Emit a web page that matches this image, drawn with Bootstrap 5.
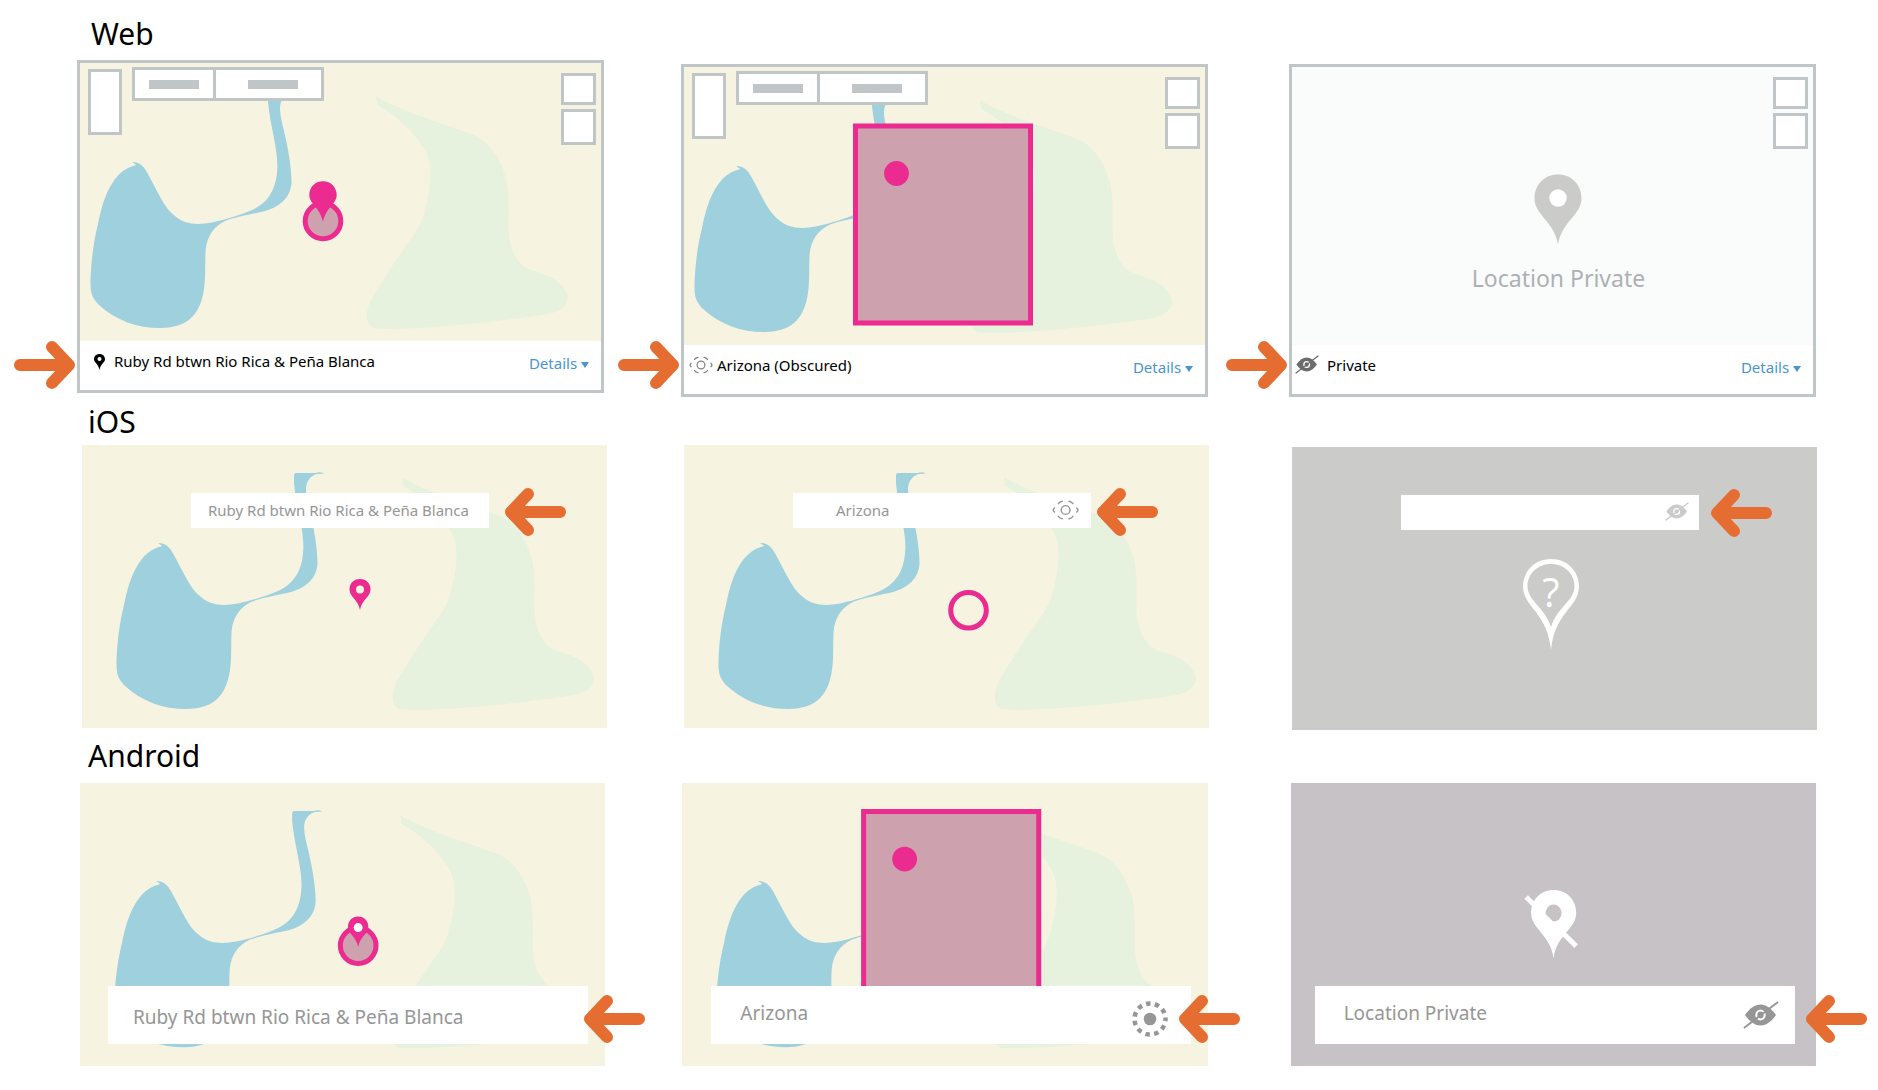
<!DOCTYPE html>
<html lang="en">
<head>
<meta charset="utf-8">
<meta name="viewport" content="width=device-width, initial-scale=1">
<title>Location privacy by platform</title>
<link href="https://cdn.jsdelivr.net/npm/bootstrap@5.3.0/dist/css/bootstrap.min.css" rel="stylesheet">
<script src="https://cdn.jsdelivr.net/npm/bootstrap@5.3.0/dist/js/bootstrap.bundle.min.js"></script>
<style>
  :root { --line: #c0c5c8; --sand: #f6f3e0; --pink: #eb2b90; --orange: #e66d31; }
  body { font-family: "Noto Sans", sans-serif; color: #000; background: #fff; font-size: 15px; line-height: 20px; }
  h2 { font-size: 30px; font-weight: 400; line-height: 40px; margin: 0; padding: 0 88px; }
  .h-web { padding-top: 14px; padding-bottom: 6px; padding-left: 91px; }
  .h-ios { padding-top: 5px; padding-bottom: 3px; }
  .h-droid { padding-top: 6px; padding-bottom: 7px; }

  .panels { display: flex; align-items: flex-start; }
  .panels > * { flex: 1 1 0; min-width: 0; position: relative; }
  .panels > :nth-child(2) { margin-left: 77px; }
  .panels > :nth-child(3) { margin-left: 83px; }
  .panels-web { padding: 0 62px 0 77px; }
  .panels-web > :nth-child(3) { margin-left: 81px; }
  .panels-ios { padding: 0 61px 0 82px; }
  .panels-droid { padding: 0 62px 0 80px; }
  .panels-ios > :nth-child(3) { margin-top: 2px; }

  .map-art { display: block; width: 100%; height: auto; background: var(--sand); }
  .web-frame { border: 3px solid var(--line); background: #fff; }
  .web-foot { height: 49px; padding: 10px 12px 0 12px; }
  .web-foot a { color: #4795d1; text-decoration: none; padding-top: 2px; }
  .web-foot.tight { padding-left: 5px; }
  .web-foot.snug { padding-left: 3px; }
  .tri { width: 8px; height: 6px; }

  .controls { position: absolute; inset: 0 0 auto 0; padding: 4px 5px 0 8px; }
  .ctl { border: 3px solid var(--line); background: #fff; padding: 0; border-radius: 0; }
  .ctl-tall { width: 34px; height: 66px; margin: 2px 10px 0 0; }
  .ctl-seg { height: 34px; display: flex; align-items: center; justify-content: center; }
  .ctl-seg i { width: 50px; height: 9px; background: var(--line); }
  .seg-a { width: 84px; }
  .seg-b { width: 111px; margin-left: -3px; padding-left: 8px; }
  .ctl-side { width: 35px; height: 32px; margin-top: 6px; }
  .ctl-side + .ctl-side { height: 36px; margin-top: 4px; }

  .pvt-text { position: absolute; top: 70%; width: 100%; text-align: center; font-size: 23px; line-height: 32px; color: #aeb0b6; padding-left: 12px; }

  .field { position: absolute; background: #fff; display: flex; align-items: center; }
  .field input { border: 0; padding: 0; background: transparent; color: #969696; flex: 1 1 auto; min-width: 0; outline: 0; line-height: 28px; }
  .field-ios { left: 109px; right: 118px; top: 48px; height: 35px; padding: 0 12px 2px 17px; }
  .field-ios.inset input { padding-left: 26px; }
  .field-ios.eye { padding-right: 10px; }
  .field-droid { left: 28px; right: 17px; top: 203px; height: 58px; padding: 4px 22px 0 25px; font-size: 19px; }
  .field-droid.mid { left: 29px; padding: 0 23px 0 29px; }
  .field-droid.end { left: 24px; right: 21px; padding: 0 16px 0 29px; }
  .field-droid.mid input, .field-droid.end input { padding-bottom: 4px; }

  .arrow { position: absolute; width: 62px; height: 48px; fill: none; stroke: var(--orange); stroke-width: 12; stroke-linecap: round; stroke-linejoin: round; }
  .arrow-web { left: -63px; bottom: 8px; }
  .arrow-web.up { bottom: 4px; }
  .arrow-ios { top: 43px; right: 41px; }
  .arrow-ios.mid { right: 51px; }
  .arrow-ios.end { right: 45px; top: 42px; }
  .arrow-droid { top: 212px; right: -40px; }
  .arrow-droid.mid { right: -32px; }
  .arrow-droid.end { right: -51px; }
</style>
</head>
<body>

<!-- shared drawings -->
<svg width="0" height="0" class="position-absolute" aria-hidden="true">
  <defs>
    <g id="land">
      <path fill="#e6f1de" d="M320 32.5L321.5 41C345 54 364 75 371 90C376 102 375.500 118 371 138C367 158 361 167 351 180C340 196 324 220 314 238C309 250 309 262 320 264.500C340 266 385 263 432 258C455 255 475 253 492 250C512 246 515 235 509 226C504 216 490 210 475 206C458 200 453 180 452.500 165C452 150 454 135 450 114C445 98 436 78 415 70C385 59 350 49 320 32.500Z"/>
      <path fill="#9ed0dd" d="M214 28L234 28Q238 26 242 28.600L234.500 29C228 31 224 37 224 44C224 54 228 65 230 76C233 90 235.500 106 235.500 118C235 134 223 144 205 148C190 151 178 153.500 170 156.500C158 162 151 172 149.600 186C149 196 149.600 210 148.600 220C146 248 134 264 104 264C82 264 60 257 42 240C36 233 34.500 230 34.500 217C35 200 37 180 42 160C48 130 58 106 80.300 101L76 98C85 98 89 104 93 112C102 128 108 144 119 152C128 160 140 161.500 156 158.500C172 155 187 150 196 146C216 137 221 120 221.400 102C221.500 84 214 60 212 38L212 31Q212 28 214 28Z"/>
    </g>
    <symbol id="arrow-right" viewBox="0 0 62 48"><path d="M6 24H55M38 6L55 24L38 42"/></symbol>
    <symbol id="arrow-left" viewBox="0 0 62 48"><path d="M56 24H7M24 6L7 24L24 42"/></symbol>
    <symbol id="eye-off" viewBox="0 0 36 28">
      <path fill="currentColor" d="M2 14C7 7 12 3.500 17.500 3.500S28 7 33 14C28 21 23 24.500 17.500 24.500S7 21 2 14Z"/>
      <ellipse cx="17.500" cy="14" rx="4.200" ry="4.400" fill="none" stroke="#fff" stroke-width="2"/>
      <path stroke="currentColor" stroke-width="2" d="M1 27L35 1"/>
    </symbol>
    <symbol id="obscured" viewBox="0 0 28 20">
      <g fill="none" stroke="currentColor" stroke-width="1.500" stroke-linecap="round">
        <circle cx="14" cy="10" r="4.500"/>
        <path d="M6.500 3.500Q8 1.500 10.500 1M17.500 1Q20 1.500 21.500 3.500M6.500 16.500Q8 18.500 10.500 19M17.500 19Q20 18.500 21.500 16.500M2.500 8Q0 10 2.500 12M25.500 8Q28 10 25.500 12"/>
      </g>
    </symbol>
  </defs>
</svg>

<main>
  <h2 class="h-web">Web</h2>
  <div class="panels panels-web">
    <section>
      <div class="web-frame">
        <div class="position-relative">
          <svg class="map-art" viewBox="24 -1 521 278" role="img" aria-label="Map, exact location">
            <use href="#land"/>
            <circle cx="267" cy="157" r="17.800" fill="#cda2ae" stroke="#eb2b90" stroke-width="5"/>
            <path fill="#eb2b90" d="M267 117.300C259 117.300 253.300 123.500 253.300 131C253.300 140 264 143 267 158C270 143 280.700 140 280.700 131C280.700 123.500 275 117.300 267 117.300Z"/>
          </svg>
          <div class="controls d-flex align-items-start">
            <button class="ctl ctl-tall" aria-label="Zoom"></button>
            <button class="ctl ctl-seg seg-a" aria-label="Map"><i></i></button>
            <button class="ctl ctl-seg seg-b" aria-label="Satellite"><i></i></button>
            <div class="ms-auto d-flex flex-column">
              <button class="ctl ctl-side" aria-label="Full screen"></button>
              <button class="ctl ctl-side" aria-label="Layers"></button>
            </div>
          </div>
        </div>
        <div class="web-foot d-flex align-items-start">
          <svg width="14" height="20" viewBox="0 0 14 20" class="me-2"><path fill-rule="evenodd" d="M7.500 3C4 3 2 5.500 2 8.300C2 11.500 6.500 13 7.500 19C8.500 13 13 11.500 13 8.300C13 5.500 11 3 7.500 3ZM7.500 6A2 2 0 1 1 7.500 10A2 2 0 0 1 7.500 6Z"/></svg>
          <span>Ruby Rd btwn Rio Rica &amp; Peña Blanca</span>
          <a href="#" class="ms-auto">Details <svg class="tri" viewBox="0 0 8 6"><path fill="#4795d1" d="M0 0H8L4 6Z"/></svg></a>
        </div>
      </div>
      <svg class="arrow arrow-web up"><use href="#arrow-right"/></svg>
    </section>

    <section class="mt-1">
      <div class="web-frame">
        <div class="position-relative">
          <svg class="map-art" viewBox="24 -1 521 278" role="img" aria-label="Map, obscured location">
            <use href="#land"/>
            <rect x="195.500" y="58" width="175" height="197" fill="#cda2ae" stroke="#eb2b90" stroke-width="5"/>
            <circle cx="236.500" cy="105.500" r="12.400" fill="#eb2b90"/>
          </svg>
          <div class="controls d-flex align-items-start">
            <button class="ctl ctl-tall" aria-label="Zoom"></button>
            <button class="ctl ctl-seg seg-a" aria-label="Map"><i></i></button>
            <button class="ctl ctl-seg seg-b" aria-label="Satellite"><i></i></button>
            <div class="ms-auto d-flex flex-column">
              <button class="ctl ctl-side" aria-label="Full screen"></button>
              <button class="ctl ctl-side" aria-label="Layers"></button>
            </div>
          </div>
        </div>
        <div class="web-foot tight d-flex align-items-start">
          <svg width="24" height="20" class="me-1" color="#858585"><use href="#obscured"/></svg>
          <span>Arizona (Obscured)</span>
          <a href="#" class="ms-auto">Details <svg class="tri" viewBox="0 0 8 6"><path fill="#4795d1" d="M0 0H8L4 6Z"/></svg></a>
        </div>
      </div>
      <svg class="arrow arrow-web"><use href="#arrow-right"/></svg>
    </section>

    <section class="mt-1">
      <div class="web-frame">
        <div class="position-relative">
          <svg class="map-art" style="background:#fafcfb" viewBox="0 0 521 278" role="img" aria-label="No map">
            <path fill="#cbcbca" d="M266 107.500C252 107.500 242.500 118 242.500 131.500C242.500 148 262 154 266 177.500C270 154 289.500 148 289.500 131.500C289.500 118 280 107.500 266 107.500Z"/>
            <circle cx="266" cy="131" r="8.700" fill="#fff"/>
          </svg>
          <div class="pvt-text">Location Private</div>
          <div class="controls d-flex align-items-start">
            <div class="ms-auto d-flex flex-column">
              <button class="ctl ctl-side" aria-label="Full screen"></button>
              <button class="ctl ctl-side" aria-label="Layers"></button>
            </div>
          </div>
        </div>
        <div class="web-foot snug d-flex align-items-start">
          <svg width="24" height="19" class="me-2" color="#6c6c6c"><use href="#eye-off"/></svg>
          <span>Private</span>
          <a href="#" class="ms-auto">Details <svg class="tri" viewBox="0 0 8 6"><path fill="#4795d1" d="M0 0H8L4 6Z"/></svg></a>
        </div>
      </div>
      <svg class="arrow arrow-web"><use href="#arrow-right"/></svg>
    </section>
  </div>

  <h2 class="h-ios">iOS</h2>
  <div class="panels panels-ios">
    <section>
      <svg class="map-art" viewBox="0 0 525 283" role="img" aria-label="Map, exact location">
        <use href="#land"/>
        <path fill="#eb2b90" fill-rule="evenodd" d="M278 134C271.500 134 267.500 138.500 267.500 144.500C267.500 152 276 154 278 165C280 154 288.500 152 288.500 144.500C288.500 138.500 284.500 134 278 134ZM278 140.500A4 4 0 1 1 278 148.500A4 4 0 0 1 278 140.500Z"/>
      </svg>
      <div class="field field-ios"><input type="text" aria-label="Location" value="Ruby Rd btwn Rio Rica &amp; Peña Blanca"></div>
      <svg class="arrow arrow-ios"><use href="#arrow-left"/></svg>
    </section>
    <section>
      <svg class="map-art" viewBox="0 0 525 283" role="img" aria-label="Map, obscured location">
        <use href="#land"/>
        <circle cx="284.500" cy="165.300" r="17.800" fill="none" stroke="#eb2b90" stroke-width="5"/>
      </svg>
      <div class="field field-ios inset"><input type="text" aria-label="Location" value="Arizona"><svg width="28" height="20" color="#969696"><use href="#obscured"/></svg></div>
      <svg class="arrow arrow-ios mid"><use href="#arrow-left"/></svg>
    </section>
    <section>
      <svg class="map-art" style="background:#cbcbca" viewBox="0 0 525 283" role="img" aria-label="Unknown location">
        <path fill="#fff" fill-rule="evenodd" d="M259 112C242 112 231 125 231 139C231 161 255 164 259 203C263 164 287 161 287 139C287 125 276 112 259 112ZM259 117C245 117 235.500 127.500 235.500 139C235.500 154 252 159 259 180C266 159 282.500 154 282.500 139C282.500 127.500 273 117 259 117Z"/>
        <text x="259" y="160" text-anchor="middle" font-size="40" font-family="Open Sans, sans-serif" fill="#fff">?</text>
      </svg>
      <div class="field field-ios eye"><input type="text" aria-label="Location" value=""><svg width="24" height="19" color="#cbcbca"><use href="#eye-off"/></svg></div>
      <svg class="arrow arrow-ios end"><use href="#arrow-left"/></svg>
    </section>
  </div>

  <h2 class="h-droid">Android</h2>
  <div class="panels panels-droid">
    <section>
      <svg class="map-art" viewBox="0 0 525 283" role="img" aria-label="Map, exact location">
        <use href="#land"/>
        <circle cx="278" cy="162.500" r="17.800" fill="#cda2ae" stroke="#eb2b90" stroke-width="5"/>
        <path fill="#eb2b90" d="M278 133.500C272 133.500 267.800 138 267.800 144C267.800 151 276 153 278 164C280 153 288.200 151 288.200 144C288.200 138 284 133.500 278 133.500Z"/>
        <circle cx="278" cy="144.500" r="4.500" fill="#fff"/>
      </svg>
      <div class="field field-droid"><input type="text" aria-label="Location" value="Ruby Rd btwn Rio Rica &amp; Peña Blanca"></div>
      <svg class="arrow arrow-droid"><use href="#arrow-left"/></svg>
    </section>
    <section>
      <svg class="map-art" viewBox="0 0 525 283" role="img" aria-label="Map, obscured location">
        <use href="#land"/>
        <rect x="181.500" y="28.500" width="175" height="197" fill="#cda2ae" stroke="#eb2b90" stroke-width="5"/>
        <circle cx="222.500" cy="76" r="12.400" fill="#eb2b90"/>
      </svg>
      <div class="field field-droid mid"><input type="text" aria-label="Location" value="Arizona"><svg width="36" height="36" viewBox="0 0 36 36" class="mt-2"><circle cx="18" cy="18" r="6.300" fill="#969696"/><circle cx="18" cy="18" r="15.500" fill="none" stroke="#969696" stroke-width="4.500" stroke-dasharray="4.500 4.354" stroke-dashoffset="2.250"/></svg></div>
      <svg class="arrow arrow-droid mid"><use href="#arrow-left"/></svg>
    </section>
    <section>
      <svg class="map-art" style="background:#c7c2c6" viewBox="0 0 525 283" role="img" aria-label="Private location">
        <path stroke="#fff" stroke-width="5" d="M235 114L285 163"/>
        <path fill="#fff" d="M262.400 107C249 107 240 117 240 130C240 146 259 151 262.400 175C266 151 285 146 285 130C285 117 276 107 262.400 107Z"/>
        <path fill="#c7c2c6" d="M254.500 131A8 8.500 0 1 1 262 138.500Z"/>
      </svg>
      <div class="field field-droid end"><input type="text" aria-label="Location" value="Location Private"><svg width="36" height="28" color="#969696"><use href="#eye-off"/></svg></div>
      <svg class="arrow arrow-droid end"><use href="#arrow-left"/></svg>
    </section>
  </div>
</main>
</body>
</html>
